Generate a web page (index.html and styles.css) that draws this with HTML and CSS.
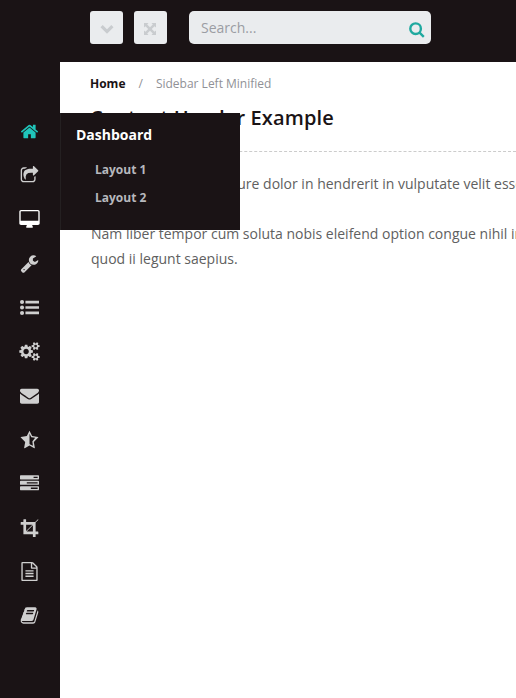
FILE: index.html
```
<!DOCTYPE html>
<html lang="en">
<head>
<meta charset="utf-8">
<title>Sidebar Left Minified</title>
<link rel="stylesheet" href="styles.css">
</head>
<body>
<header class="topbar">
  <button class="tool" aria-label="Collapse"><svg class="tool-icon" viewBox="0 0 14 14"><path d="M1.6 4.2 7 9.6l5.4-5.4" fill="none" stroke="currentColor" stroke-width="3.2"/></svg></button>
  <button class="tool" aria-label="Fullscreen"><svg class="tool-icon" viewBox="0 0 14 14"><path d="M1 1h4.500L4.200 2.500 7 5.200l2.800-2.700L8.500 1H13v4.500L11.500 4.200 8.800 7l2.700 2.800L13 8.500V13H8.500l1.300-1.500L7 8.800l-2.800 2.700L5.500 13H1V8.500l1.500 1.300L5.200 7 2.500 4.200 1 5.500z" transform="translate(-1 0)"/></svg></button>
  <label class="search"><input type="text" placeholder="Search..."><svg class="search-icon" viewBox="0 0 16 16"><circle cx="6.600" cy="6.700" r="5.300"/><path d="m10.500 10.600 4.300 4.200"/></svg></label>
</header>
<div class="layout">
  <nav class="sidebar">
    <a class="item active"><svg class="icon" viewBox="0 0 1792 1792"><path d="M1472 992v480q0 26-19 45t-45 19h-384v-384h-256v384h-384q-26 0-45-19t-19-45v-480q0-1 .5-3t.5-3l575-474 575 474q1 2 1 6zm223-69l-62 74q-8 9-21 11h-3q-13 0-21-7l-692-577-692 577q-12 8-24 7-13-2-21-11l-62-74q-8-10-7-23.5t11-21.5l719-599q32-26 76-26t76 26l244 204v-195q0-14 9-23t23-9h192q14 0 23 9t9 23v408l219 182q10 8 11 21.5t-7 23.5z"/></svg></a>
    <a class="item"><svg class="icon" viewBox="0 0 1792 1792"><path d="M1472 989v259q0 119-84.5 203.5t-203.5 84.5h-832q-119 0-203.5-84.5t-84.5-203.5v-832q0-119 84.5-203.5t203.5-84.5h255q13 0 22.5 9.5t9.5 22.5q0 27-26 32-77 26-133 60-10 4-16 4h-112q-66 0-113 47t-47 113v832q0 66 47 113t113 47h832q66 0 113-47t47-113v-214q0-19 18-29 28-13 54-37 16-16 35-8 21 9 21 29zm237-496l-384 384q-18 19-45 19-12 0-25-5-39-17-39-59v-192h-160q-323 0-438 131-119 137-74 473 3 23-20 34-8 2-12 2-16 0-26-13-10-14-21-31t-39.5-68.5-49.5-99.5-38.500-114-17.500-122q0-49 3.500-91t14-90 28-88 47-81.500 68.500-74 94.500-61.500 124.500-48.500 159.500-30.500 196.500-11h160v-192q0-42 39-59 13-5 25-5 26 0 45 19l384 384q19 19 19 45t-19 45z"/></svg></a>
    <a class="item current"><svg class="icon" viewBox="0 0 1792 1792"><path d="M1728 992v-832q0-13-9.500-22.500t-22.500-9.500h-1600q-13 0-22.500 9.500t-9.500 22.500v832q0 13 9.500 22.500t22.500 9.500h1600q13 0 22.500-9.500t9.500-22.500zm128-832v1088q0 66-47 113t-113 47h-544q0 37 16 77.500t32 71 16 43.500q0 26-19 45t-45 19h-512q-26 0-45-19t-19-45q0-14 16-44t32-70 16-78h-544q-66 0-113-47t-47-113v-1088q0-66 47-113t113-47h1600q66 0 113 47t47 113z"/></svg></a>
    <a class="item"><svg class="icon" viewBox="0 0 1792 1792"><path d="M448 1472q0-26-19-45t-45-19-45 19-19 45 19 45 45 19 45-19 19-45zm644-420l-682 682q-37 37-90 37-52 0-91-37l-106-108q-38-36-38-90 0-53 38-91l681-681q39 98 114.500 173.500t173.500 114.500zm634-435q0 39-23 106-47 134-164.500 217.500t-258.500 83.500q-185 0-316.500-131.500t-131.500-316.500 131.500-316.500 316.500-131.500q58 0 121.500 16.500t107.500 46.500q16 11 16 28t-16 28l-293 169v224l193 107q5-3 79-48.500t135.500-81 70.500-35.500q15 0 23.500 10t8.500 25z"/></svg></a>
    <a class="item"><svg class="icon" viewBox="0 0 1792 1792"><circle cx="192" cy="384" r="192"/><circle cx="192" cy="896" r="192"/><circle cx="192" cy="1408" r="192"/><path d="M512 256h1280v256H512zM512 768h1280v256H512zM512 1280h1280v256H512z"/></svg></a>
    <a class="item"><svg class="icon" viewBox="0 0 1792 1792"><g transform="translate(-64 0)"><path d="M896 896q0-106-75-181t-181-75-181 75-75 181 75 181 181 75 181-75 75-181zm768 512q0-52-38-90t-90-38-90 38-38 90q0 53 37.500 90.500t90.500 37.500 90.500-37.500 37.500-90.500zm0-1024q0-52-38-90t-90-38-90 38-38 90q0 53 37.500 90.500t90.500 37.500 90.500-37.500 37.500-90.500zm-384 421v185q0 10-7 19.500t-16 10.500l-155 24q-11 35-32 76 34 48 90 115 7 11 7 20 0 12-7 19-23 30-82.500 89.500t-78.500 59.500q-11 0-21-7l-115-90q-37 19-77 31-11 108-23 155-7 24-30 24h-186q-11 0-20-7.500t-10-17.500l-23-153q-34-10-75-31l-118 89q-7 7-20 7-11 0-21-8-144-133-144-160 0-9 7-19 10-14 41-53t47-61q-23-44-35-82l-152-24q-10-1-17-9.500t-7-19.500v-185q0-10 7-19.500t16-10.500l155-24q11-35 32-76-34-48-90-115-7-11-7-20 0-12 7-20 22-30 82-89t79-59q11 0 21 7l115 90q34-18 77-32 11-108 23-154 7-24 30-24h186q11 0 20 7.500t10 17.500l23 153q34 10 75 31l118-89q8-7 20-7 11 0 21 8 144 133 144 160 0 8-7 19-12 16-42 54t-45 60q23 48 34 82l152 23q10 2 17 10.500t7 19.500zm640 533v140q0 16-149 31-12 27-30 52 51 113 51 138 0 4-4 7-122 71-124 71-8 0-46-47t-52-68q-20 2-30 2t-30-2q-14 21-52 68t-46 47q-2 0-124-71-4-3-4-7 0-25 51-138-18-25-30-52-149-15-149-31v-140q0-16 149-31 13-29 30-52-51-113-51-138 0-4 4-7 4-2 35-20t59-34 30-16q8 0 46 46.500t52 67.500q20-2 30-2t30 2q51-71 92-112l6-2q4 0 124 70 4 3 4 7 0 25-51 138 17 23 30 52 149 15 149 31zm0-1024v140q0 16-149 31-12 27-30 52 51 113 51 138 0 4-4 7-122 71-124 71-8 0-46-47t-52-68q-20 2-30 2t-30-2q-14 21-52 68t-46 47q-2 0-124-71-4-3-4-7 0-25 51-138-18-25-30-52-149-15-149-31v-140q0-16 149-31 13-29 30-52-51-113-51-138 0-4 4-7 4-2 35-20t59-34 30-16q8 0 46 46.500t52 67.500q20-2 30-2t30 2q51-71 92-112l6-2q4 0 124 70 4 3 4 7 0 25-51 138 17 23 30 52 149 15 149 31z"/></g></svg></a>
    <a class="item"><svg class="icon" viewBox="0 0 1792 1792"><path d="M1792 710v794q0 66-47 113t-113 47h-1472q-66 0-113-47t-47-113v-794q44 49 101 87 362 246 497 345 57 42 92.500 65.500t94.500 48 110 24.500h2q51 0 110-24.500t94.500-48 92.500-65.500q170-123 498-345 57-39 100-87zm0-294q0 79-49 151t-122 123q-376 261-468 325-10 7-42.500 31t-54 38.500-52 32.500-57.500 27-50 9h-2q-23 0-50-9t-57.500-27-52-32.500-54-38.500-42.500-31q-91-64-262-182.500t-205-142.500q-62-42-117-115.500t-55-136.500q0-78 41.500-130t118.500-52h1472q65 0 112.500 47t47.500 113z"/></svg></a>
    <a class="item"><svg class="icon" viewBox="0 0 1792 1792"><path fill-rule="evenodd" d="M896 64 1147 573 1709 655Q1750 675 1718 717L1303 1121 1401 1680Q1395 1730 1345 1710L896 1472 447 1710Q397 1730 391 1680L489 1121 74 717Q42 675 83 655L645 573ZM896 350V1325L955 1356 1221 1497 1164 1076 1430 740 1063 688Z"/></svg></a>
    <a class="item"><svg class="icon" viewBox="0 0 1792 1792"><path d="M1024 1408h640v-128h-640v128zm-384-512h1024v-128h-1024v128zm640-512h384v-128h-384v128zm512 832v256q0 26-19 45t-45 19h-1664q-26 0-45-19t-19-45v-256q0-26 19-45t45-19h1664q26 0 45 19t19 45zm0-512v256q0 26-19 45t-45 19h-1664q-26 0-45-19t-19-45v-256q0-26 19-45t45-19h1664q26 0 45 19t19 45zm0-512v256q0 26-19 45t-45 19h-1664q-26 0-45-19t-19-45v-256q0-26 19-45t45-19h1664q26 0 45 19t19 45z"/></svg></a>
    <a class="item"><svg class="icon" viewBox="0 0 1792 1792"><path d="M621 1280h595v-595zm-45-45l595-595h-595v595zm1152 77v192q0 14-9 23t-23 9h-224v224q0 14-9 23t-23 9h-192q-14 0-23-9t-9-23v-224h-864q-14 0-23-9t-9-23v-864h-224q-14 0-23-9t-9-23v-192q0-14 9-23t23-9h224v-224q0-14 9-23t23-9h192q14 0 23 9t9 23v224h851l246-247q10-9 23-9t23 9q9 10 9 23t-9 23l-247 246v851h224q14 0 23 9t9 23z"/></svg></a>
    <a class="item"><svg class="icon" viewBox="0 0 1792 1792"><path d="M1596 380q28 28 48 76t20 88v1152q0 40-28 68t-68 28h-1344q-40 0-68-28t-28-68v-1600q0-40 28-68t68-28h896q40 0 88 20t76 48zm-444-244v376h376q-10-29-22-41l-313-313q-12-12-41-22zm384 1528v-1024h-416q-40 0-68-28t-28-68v-416h-768v1536h1280z"/><path d="M512 768h768v128H512zM512 1024h768v128H512zM512 1280h768v128H512z"/></svg></a>
    <a class="item"><svg class="icon" viewBox="0 0 1792 1792"><path d="M1703 478q40 57 18 129l-275 906q-19 64-76.500 107.500t-122.500 43.500h-923q-77 0-148.500-53.500t-99.500-131.500q-24-67-2-127 0-4 3-27t4-37q1-8-3-21.500t-3-19.500q2-11 8-21t16.500-23.500 16.500-23.500q23-38 45-91.500t30-91.500q3-10 .5-30t-.5-28q3-11 17-28t17-23q21-36 42-92t25-90q1-9-2.500-32t.5-28q4-13 22-30.500t22-22.500q19-26 42.500-84.500t27.500-96.500q1-8-3-25.500t-2-26.500q2-8 9-18t18-23 17-21q8-12 16.500-30.500t15-35 16-36 19.500-32 26.500-23.500 36-11.500 47.500 5.500l-1 3q38-9 51-9h761q74 0 114 56t18 130l-274 906q-36 119-71.500 153.500t-128.500 34.500h-869q-27 0-38 15-11 16-1 43 24 70 144 70h923q29 0 56-15.500t35-41.500l300-987q7-22 5-57 38 15 59 43zm-1064 2q-4 13 2 22.500t20 9.500h608q13 0 25.500-9.500t16.500-22.500l21-64q4-13-2-22.500t-20-9.500h-608q-13 0-25.500 9.500t-16.500 22.500zm-83 256q-4 13 2 22.500t20 9.500h608q13 0 25.500-9.500t16.500-22.500l21-64q4-13-2-22.500t-20-9.500h-608q-13 0-25.500 9.500t-16.500 22.500z"/></svg></a>
    <div class="flyout">
      <div class="flyout-title">Dashboard</div>
      <a class="flyout-link">Layout 1</a>
      <a class="flyout-link">Layout 2</a>
    </div>
  </nav>
  <main class="content">
    <div class="crumbs"><b>Home</b><span class="slash">/</span><span>Sidebar Left Minified</span></div>
    <h1>Content Header Example</h1>
    <p>Duis autem vel eum iriure dolor in hendrerit in vulputate velit esse molestie</p>
    <p>Nam liber tempor cum soluta nobis eleifend option congue nihil imperdiet<br>quod ii legunt saepius.</p>
  </main>
</div>
</body>
</html>
```
FILE: styles.css
```
* { box-sizing: border-box; }
body {
  margin: 0;
  height: 698px;
  overflow: hidden;
  background: #fff;
  color: #606060;
  font: 14px/25px "Open Sans", sans-serif;
}
.topbar {
  display: flex;
  height: 62px;
  padding: 11px 0 0 90px;
  background: #1a1315;
}
.tool {
  display: flex;
  align-items: center;
  justify-content: center;
  width: 33px;
  height: 33px;
  margin-right: 11px;
  padding: 3px 0 0;
  border: 0;
  border-radius: 3px;
  background: #eaecee;
  color: #c9cccf;
}
.tool-icon { width: 14px; height: 14px; fill: currentColor; }
.search {
  display: flex;
  width: 242px;
  height: 33px;
  margin-left: 11px;
  padding: 0 6px 0 12px;
  border-radius: 5px;
  background: #eaecee;
}
.search input {
  flex: 1;
  min-width: 0;
  padding: 0 0 1px;
  border: 0;
  outline: 0;
  background: none;
  font: 14px "Open Sans", sans-serif;
}
.search input::placeholder { color: #9b9da3; }
.search-icon {
  width: 16px;
  height: 16px;
  margin-top: 11px;
  fill: none;
  stroke: #1fa99f;
  stroke-width: 2.4;
}
.layout { display: flex; height: 636px; }
.sidebar {
  position: relative;
  flex: none;
  width: 60px;
  padding: 47px 1px 0 0;
  background: #1a1315;
}
.item {
  display: flex;
  align-items: center;
  justify-content: center;
  height: 44px;
  color: #cfcfcf;
}
.item.active { color: #20c5ba; }
.item.current { color: #fff; }
.icon { width: 19px; height: 19px; overflow: visible; fill: currentColor; }
.flyout {
  position: absolute;
  top: 51px;
  left: 60px;
  width: 180px;
  height: 117px;
  padding: 8px 0 0 15px;
  border-left: 1px solid #242021;
  background: #1a1315;
}
.flyout-title {
  height: 35px;
  color: #fff;
  font-weight: 700;
  line-height: 28px;
}
.flyout-link {
  display: block;
  padding-left: 19px;
  color: #b7b8bd;
  font-size: 12px;
  font-weight: 700;
  line-height: 28px;
}
.content {
  flex: 1;
  min-width: 0;
  overflow: hidden;
  padding: 9px 0 0 30px;
  white-space: nowrap;
}
.crumbs { display: flex; color: #909196; font-size: 12px; }
.crumbs b { color: #1a1315; }
.slash { margin: 0 13px; }
h1 {
  height: 56px;
  margin: 0 0 19px;
  padding-top: 8px;
  border-bottom: 1px dashed #ccc;
  color: #1a1315;
  font-size: 20px;
  font-weight: 600;
  letter-spacing: 0.12px;
  line-height: 28px;
}
p { margin: 0 0 25px 1px; }
```
